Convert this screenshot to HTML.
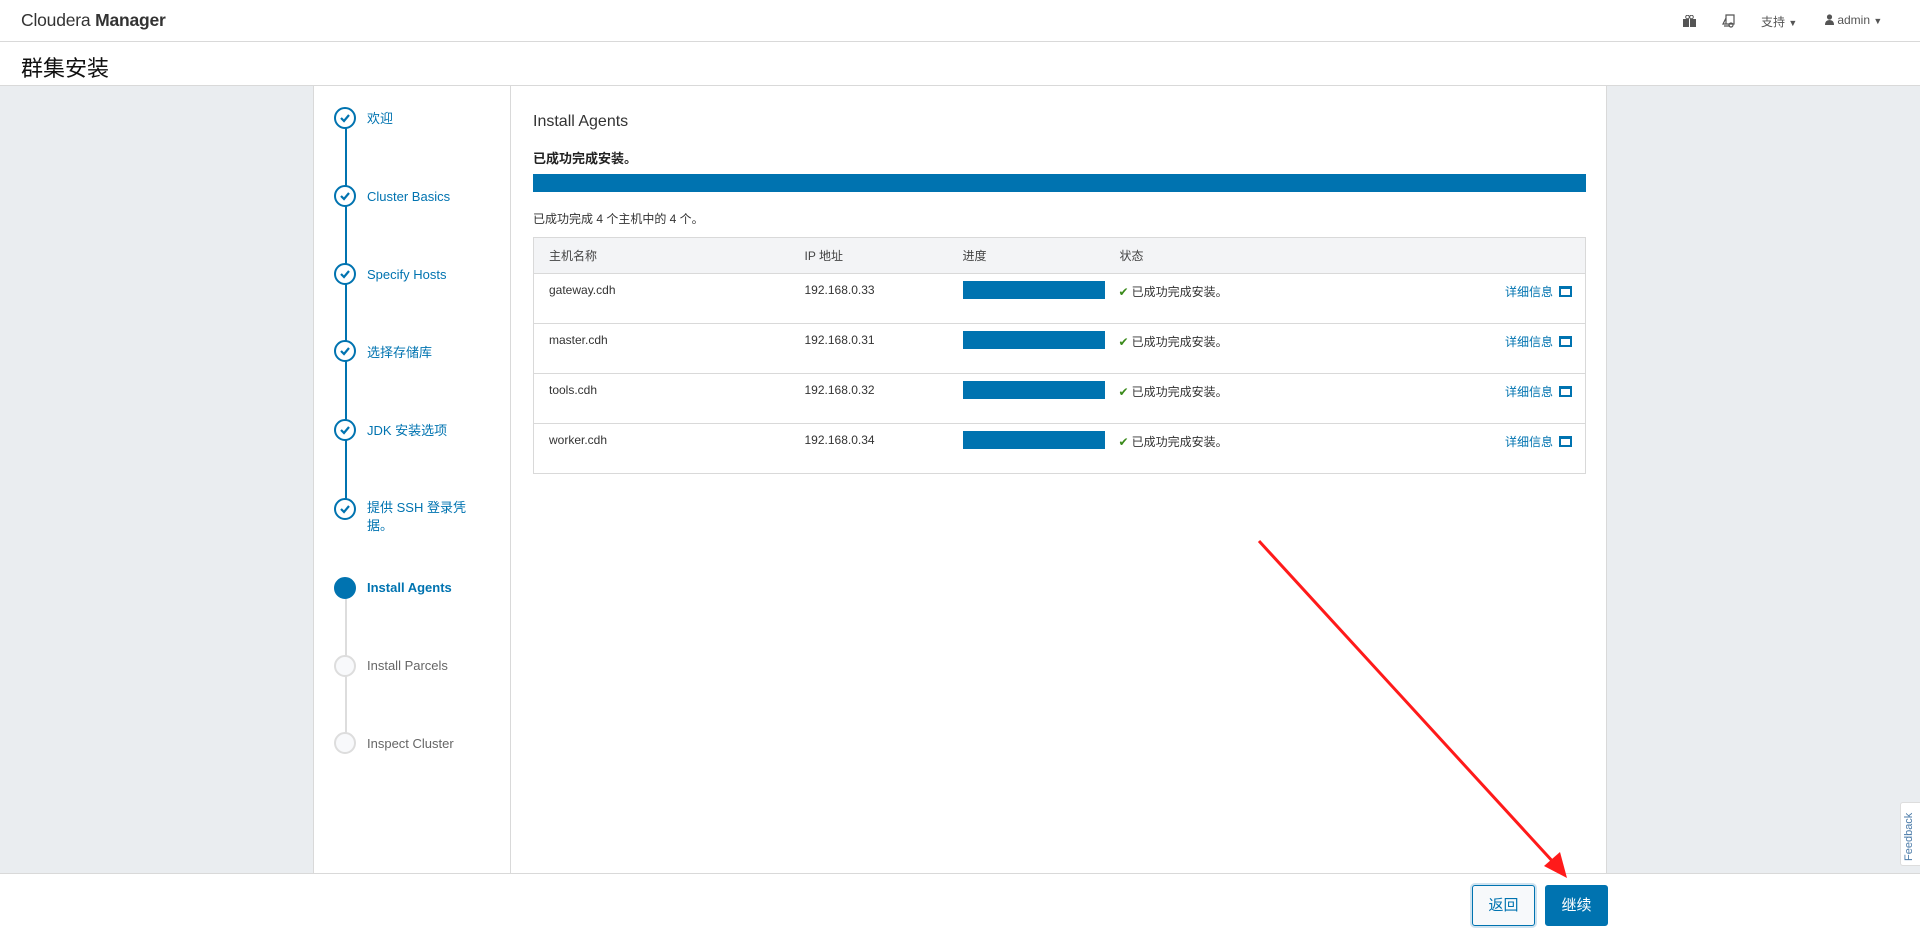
<!DOCTYPE html>
<html><head><meta charset="utf-8"><style>
*{box-sizing:border-box;margin:0;padding:0}
body{width:1920px;height:937px;overflow:hidden;background:#fff;font-family:"Liberation Sans","Noto Sans CJK SC",sans-serif;color:#333;position:relative}
.hdr{position:absolute;left:0;top:0;width:1920px;height:42px;border-bottom:1px solid #d9d9d9;background:#fff}
.logo{position:absolute;left:21px;top:10px;font-size:17.5px;color:#333;letter-spacing:-0.2px}
.logo b{font-weight:bold}
.title{position:absolute;left:0;top:42px;width:1920px;height:44px;border-bottom:1px solid #d9d9d9;background:#fff}
.title span{position:absolute;left:21px;top:9px;font-size:22px;color:#111}
.gray{position:absolute;left:0;top:86px;width:1920px;height:787px;background:#eaedf0}
.side{position:absolute;left:313px;top:86px;width:198px;height:787px;background:#fff;border-left:1px solid #d9d9d9;border-right:1px solid #d9d9d9}
.main{position:absolute;left:511px;top:86px;width:1096px;height:787px;background:#fff;border-right:1px solid #d9d9d9}
.foot{position:absolute;left:0;top:873px;width:1920px;height:64px;background:#fff;border-top:1px solid #d9d9d9}
.step{position:absolute;left:367px;font-size:13px;color:#0073b0;line-height:18px}
.circ{position:absolute;left:334px;width:22px;height:22px;border-radius:50%;border:2px solid #0073b0;background:#fff}
.circ svg{position:absolute;left:3px;top:3px}
.circ.on{background:#0073b0}
.circ.off{border-color:#ddd;background:#f8f9fb}
.vl{position:absolute;left:345px;width:2px}
table{position:absolute;left:533px;top:237px;width:1053px;border-collapse:collapse;border:1px solid #d9d9d9;font-size:12px}
th{background:#f3f4f6;height:36px;text-align:left;font-weight:normal;color:#444;padding-left:15px;border-bottom:1px solid #d9d9d9}
td{height:50px;vertical-align:top;padding:9px 0 0 15px;border-bottom:1px solid #d9d9d9;color:#333}
.bar{width:142px;height:18px;background:#0073b0;margin-top:-2px}
.det{color:#0073b0;float:right;margin-right:13px}
.det i{display:inline-block;width:13px;height:11px;border:2px solid #0073b0;border-top-width:3px;margin-left:6px;vertical-align:-1px}
.ok{color:#3a8a1a;margin-right:3px}
.btn{position:absolute;top:885px;height:41px;width:63px;border:1px solid #0073b0;border-radius:3px;font-size:15px;text-align:center;line-height:39px}
.nav{position:absolute;top:13px;font-size:12px;color:#555}
</style></head><body>
<div class="hdr"><div class="logo">Cloudera <b>Manager</b></div>
<svg class="nav" style="left:1683px;top:15px" width="13" height="12" viewBox="0 0 13 12"><rect x="0" y="4" width="13" height="8" fill="#555"/><rect x="6" y="4" width="1" height="8" fill="#fff"/><circle cx="4.5" cy="2" r="1.8" fill="none" stroke="#555"/><circle cx="8.5" cy="2" r="1.8" fill="none" stroke="#555"/></svg>
<svg class="nav" style="left:1722px;top:14px" width="14" height="14" viewBox="0 0 14 14" fill="none" stroke="#555" stroke-width="1.2"><path d="M4 1h8v9H4zM4 4L1 10h3M2 12h6"/><circle cx="9" cy="11" r="2"/></svg>
<div class="nav" style="left:1761px">支持 <span style="font-size:9px">▼</span></div>
<div class="nav" style="left:1825px"><svg width="9" height="11" viewBox="0 0 9 11" style="vertical-align:-1px"><circle cx="4.5" cy="3" r="2.6" fill="#555"/><path d="M0 11q0-5 4.5-5t4.5 5z" fill="#555"/></svg> admin <span style="font-size:9px">▼</span></div>
</div>
<div class="title"><span>群集安装</span></div>
<div class="gray"></div>
<div class="side"></div>
<div class="main">
<div style="position:absolute;left:22px;top:27px;font-size:16px;color:#333">Install Agents</div>
<div style="position:absolute;left:22px;top:62px;font-size:13px;font-weight:bold;color:#222">已成功完成安装。</div>
<div style="position:absolute;left:22px;top:88px;width:1053px;height:18px;background:#0073b0"></div>
<div style="position:absolute;left:22px;top:124px;font-size:12px;color:#333">已成功完成 4 个主机中的 4 个。</div>
</div>
<div class="vl" style="top:118px;height:390px;background:#0073b0"></div>
<div class="vl" style="top:588px;height:156px;background:#ddd"></div>
<div class="circ" style="top:107px"><svg width="12" height="12" viewBox="0 0 12 12"><path d="M2 6l3 3 5-6" fill="none" stroke="#0073b0" stroke-width="2.2"/></svg></div>
<div class="circ" style="top:185px"><svg width="12" height="12" viewBox="0 0 12 12"><path d="M2 6l3 3 5-6" fill="none" stroke="#0073b0" stroke-width="2.2"/></svg></div>
<div class="circ" style="top:263px"><svg width="12" height="12" viewBox="0 0 12 12"><path d="M2 6l3 3 5-6" fill="none" stroke="#0073b0" stroke-width="2.2"/></svg></div>
<div class="circ" style="top:340px"><svg width="12" height="12" viewBox="0 0 12 12"><path d="M2 6l3 3 5-6" fill="none" stroke="#0073b0" stroke-width="2.2"/></svg></div>
<div class="circ" style="top:419px"><svg width="12" height="12" viewBox="0 0 12 12"><path d="M2 6l3 3 5-6" fill="none" stroke="#0073b0" stroke-width="2.2"/></svg></div>
<div class="circ" style="top:498px"><svg width="12" height="12" viewBox="0 0 12 12"><path d="M2 6l3 3 5-6" fill="none" stroke="#0073b0" stroke-width="2.2"/></svg></div>
<div class="circ on" style="top:577px"></div>
<div class="circ off" style="top:655px"></div>
<div class="circ off" style="top:732px"></div>
<div class="step" style="top:110px">欢迎</div>
<div class="step" style="top:188px">Cluster Basics</div>
<div class="step" style="top:266px">Specify Hosts</div>
<div class="step" style="top:344px">选择存储库</div>
<div class="step" style="top:422px">JDK 安装选项</div>
<div class="step" style="top:499px">提供 SSH 登录凭<br>据。</div>
<div class="step" style="top:579px;font-weight:bold">Install Agents</div>
<div class="step" style="top:657px;color:#666">Install Parcels</div>
<div class="step" style="top:735px;color:#666">Inspect Cluster</div>
<table>
<tr><th style="width:256px">主机名称</th><th style="width:158px">IP 地址</th><th style="width:156px">进度</th><th>状态</th></tr>
<tr><td>gateway.cdh</td><td>192.168.0.33</td><td><div class="bar"></div></td><td style="padding-left:14px"><span class="ok">✔</span>已成功完成安装。<span class="det">详细信息<i></i></span></td></tr>
<tr><td>master.cdh</td><td>192.168.0.31</td><td><div class="bar"></div></td><td style="padding-left:14px"><span class="ok">✔</span>已成功完成安装。<span class="det">详细信息<i></i></span></td></tr>
<tr><td>tools.cdh</td><td>192.168.0.32</td><td><div class="bar"></div></td><td style="padding-left:14px"><span class="ok">✔</span>已成功完成安装。<span class="det">详细信息<i></i></span></td></tr>
<tr><td>worker.cdh</td><td>192.168.0.34</td><td><div class="bar"></div></td><td style="padding-left:14px"><span class="ok">✔</span>已成功完成安装。<span class="det">详细信息<i></i></span></td></tr>
</table>
<div class="foot"></div>
<div class="btn" style="left:1472px;background:#f7f9fb;color:#0073b0;box-shadow:0 0 0 2px #cfe3f0">返回</div>
<div class="btn" style="left:1545px;background:#0073b0;color:#fff">继续</div>
<div style="position:absolute;left:1900px;top:802px;width:20px;height:64px;background:#fff;border:1px solid #ddd;border-right:none;border-radius:3px 0 0 3px"><div style="position:absolute;left:2px;top:58px;transform:rotate(-90deg);transform-origin:0 0;font-size:11px;color:#4a7aa8">Feedback</div></div>
<svg style="position:absolute;left:0;top:0" width="1920" height="937"><line x1="1259" y1="541" x2="1555" y2="864" stroke="#ff1a1a" stroke-width="3"/><polygon points="1567,878 1544,866 1560,852" fill="#ff1a1a"/></svg>
</body></html>
